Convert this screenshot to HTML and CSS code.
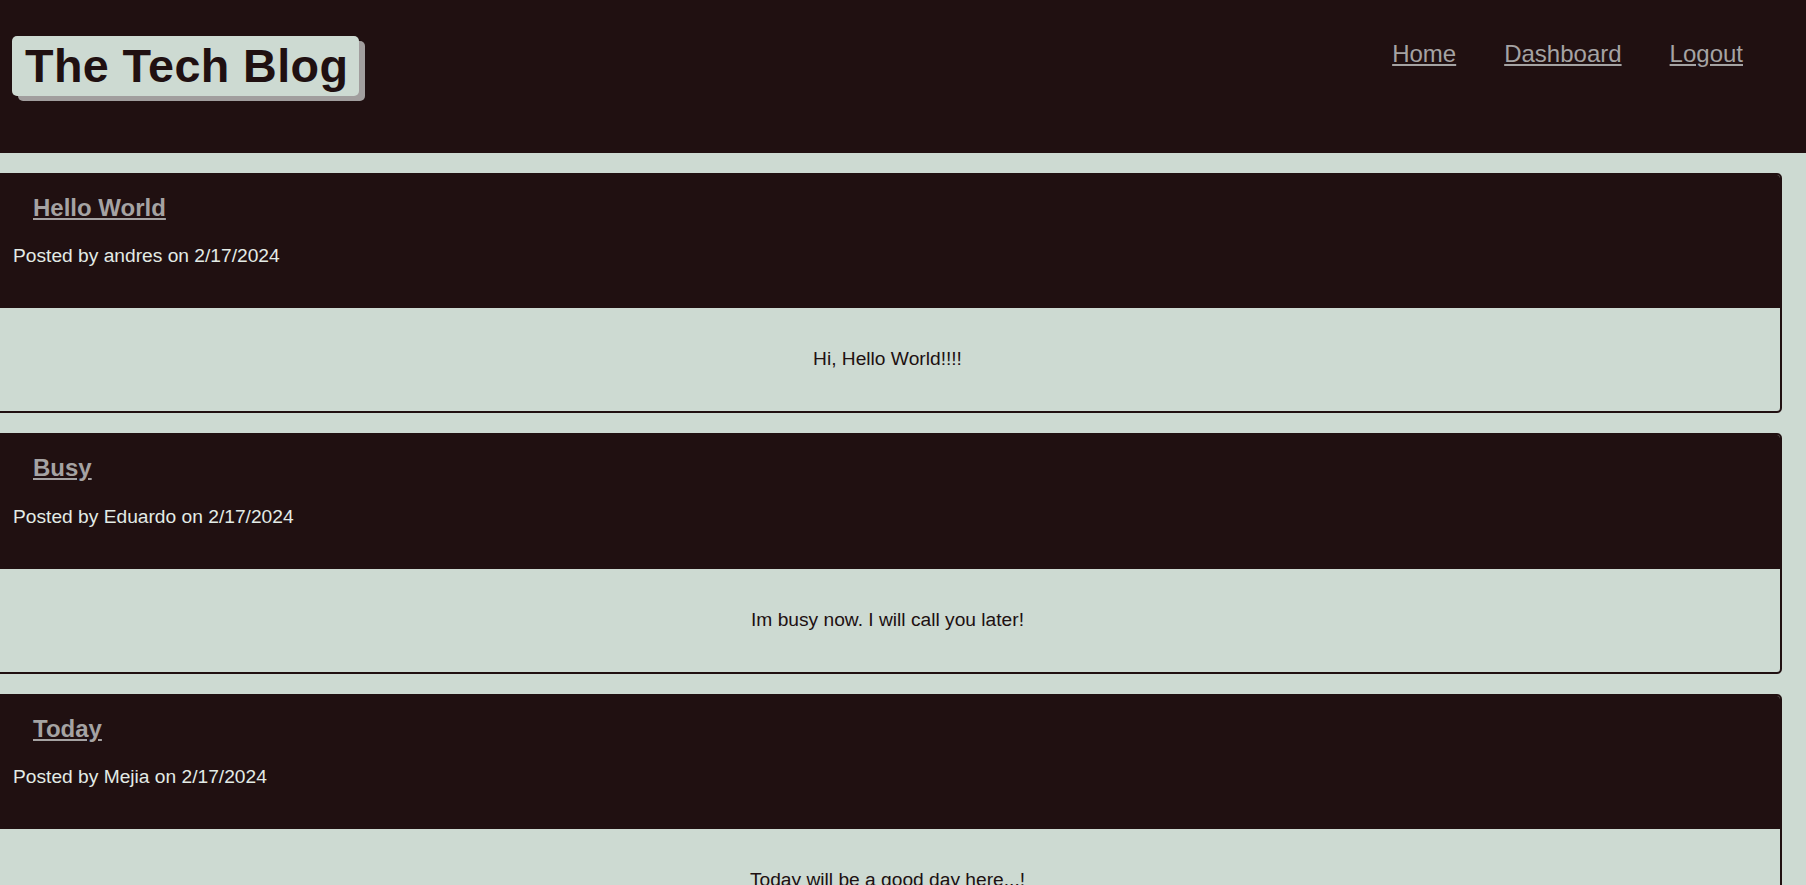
FILE: index.html
```html
<!DOCTYPE html>
<html lang="en">
<head>
<meta charset="utf-8">
<title>The Tech Blog</title>
<link rel="stylesheet" href="styles.css">
</head>
<body>
<header class="site-header">
  <h1 class="logo">The Tech Blog</h1>
  <nav class="nav">
    <a href="#" class="nav-link">Home</a>
    <a href="#" class="nav-link">Dashboard</a>
    <a href="#" class="nav-link">Logout</a>
  </nav>
</header>
<main class="posts">
  <article class="post">
    <div class="post-head">
      <h2 class="post-title"><a href="#">Hello World</a></h2>
      <p class="post-meta">Posted by andres on 2/17/2024</p>
    </div>
    <div class="post-body">Hi, Hello World!!!!</div>
  </article>
  <article class="post">
    <div class="post-head">
      <h2 class="post-title"><a href="#">Busy</a></h2>
      <p class="post-meta">Posted by Eduardo on 2/17/2024</p>
    </div>
    <div class="post-body">Im busy now. I will call you later!</div>
  </article>
  <article class="post">
    <div class="post-head">
      <h2 class="post-title"><a href="#">Today</a></h2>
      <p class="post-meta">Posted by Mejia on 2/17/2024</p>
    </div>
    <div class="post-body">Today will be a good day here...!</div>
  </article>
</main>
</body>
</html>
```
FILE: styles.css
```css
* { box-sizing: border-box; }
html, body {
  margin: 0;
  padding: 0;
}
body {
  background: #cddad2;
  font-family: "Liberation Sans", Arial, sans-serif;
  color: #201011;
  overflow: hidden;
}
.site-header {
  background: #201011;
  height: 153px;
  padding: 36px 63px 0 12px;
  display: flex;
  justify-content: space-between;
  align-items: flex-start;
}
.logo {
  margin: 0;
  background: #cddad2;
  color: #201011;
  font-size: 46.7px;
  font-weight: bold;
  letter-spacing: 0.4px;
  line-height: 60px;
  height: 60px;
  padding: 0 11px 0 13px;
  border-radius: 5px;
  box-shadow: 6px 5px 0 #a19e9e;
}
.nav {
  display: flex;
  gap: 48px;
  margin-top: 4px;
}
.nav-link {
  color: #a5a3a3;
  font-size: 24px;
  line-height: normal;
}
.posts {
  padding: 20px 24px 0 0;
  display: flex;
  flex-direction: column;
  gap: 20px;
}
.post {
  margin-left: -7px;
  border: 2px solid #201011;
  border-radius: 5px;
  overflow: hidden;
}
.post-head {
  background: #201011;
  margin: -2px -2px 0 -2px;
  padding: 21px 20px 41px 20px;
}
.post-title {
  margin: 0 0 0 20px;
  font-size: 24px;
  line-height: normal;
  font-weight: bold;
}
.post-title a {
  color: #a5a3a3;
}
.post-meta {
  margin: 23.4px 0 0;
  font-size: 19.2px;
  line-height: normal;
  color: #e3ebe6;
}
.post-body {
  padding: 40px 20px 41px;
  text-align: center;
  font-size: 19.2px;
  line-height: normal;
  color: #201011;
}
```
